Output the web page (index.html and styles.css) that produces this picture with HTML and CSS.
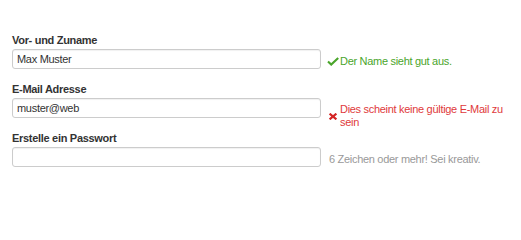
FILE: index.html
```html
<!DOCTYPE html>
<html lang="de">
<head>
<meta charset="utf-8">
<title>Formular</title>
<link rel="stylesheet" href="styles.css">
</head>
<body>
<form class="form">
  <div class="group">
    <label class="label" for="name">Vor- und Zuname</label>
    <div class="row">
      <input class="field" id="name" type="text" value="Max Muster">
      <div class="msg msg-ok">
        <svg class="icon" width="12" height="9" viewBox="0 0 12 9"><path d="M1 4.6 L4.2 7.6 L11.2 0.9" fill="none" stroke="currentColor" stroke-width="2.1"/></svg>
        <span class="msg-text">Der Name sieht gut aus.</span>
      </div>
    </div>
  </div>
  <div class="group">
    <label class="label" for="mail">E-Mail Adresse</label>
    <div class="row">
      <input class="field" id="mail" type="text" value="muster@web">
      <div class="msg msg-err">
        <svg class="icon" width="12" height="7" viewBox="0 0 12 7"><path d="M2.6 0.6 L9.4 6.4 M9.4 0.6 L2.6 6.4" fill="none" stroke="currentColor" stroke-width="2.1"/></svg>
        <span class="msg-text">Dies scheint keine gültige E-Mail zu sein</span>
      </div>
    </div>
  </div>
  <div class="group">
    <label class="label" for="pw">Erstelle ein Passwort</label>
    <div class="row">
      <input class="field" id="pw" type="password" value="">
      <div class="msg msg-hint">
        <span class="msg-text">6 Zeichen oder mehr! Sei kreativ.</span>
      </div>
    </div>
  </div>
</form>
</body>
</html>
```

FILE: styles.css
```css
html, body {
  margin: 0;
  background: #ffffff;
}

body {
  font-family: "Liberation Sans", Arial, sans-serif;
  font-size: 11px;
  letter-spacing: -0.3px;
  color: #333333;
}

.form {
  padding: 33px 0 0 12px;
}

.group {
  margin-bottom: 13px;
}

.label {
  display: block;
  font-weight: bold;
  line-height: 14px;
  margin-bottom: 2px;
  color: #333333;
}

.row {
  display: flex;
  align-items: flex-start;
  gap: 6px;
  height: 20px;
}

.field {
  box-sizing: border-box;
  width: 309px;
  height: 20px;
  margin: 0;
  padding: 0 4px;
  border: 1px solid #cccccc;
  border-radius: 3px;
  box-shadow: inset 0 1px 1px rgba(0, 0, 0, 0.06);
  font-family: "Liberation Sans", Arial, sans-serif;
  font-size: 11px;
  letter-spacing: -0.3px;
  color: #333333;
  background: #ffffff;
  flex: none;
}

.msg {
  display: flex;
  align-items: center;
  width: 186px;
  padding-top: 6px;
  line-height: 13px;
}

.icon {
  flex: none;
  width: 12px;
  margin-right: 1px;
}

.msg-ok {
  color: #4aa52b;
}

.msg-err {
  color: #e0393b;
  padding-top: 5px;
}

.msg-err .icon {
  color: #d42525;
}

.msg-hint {
  color: #999999;
  padding-left: 2px;
}
```
